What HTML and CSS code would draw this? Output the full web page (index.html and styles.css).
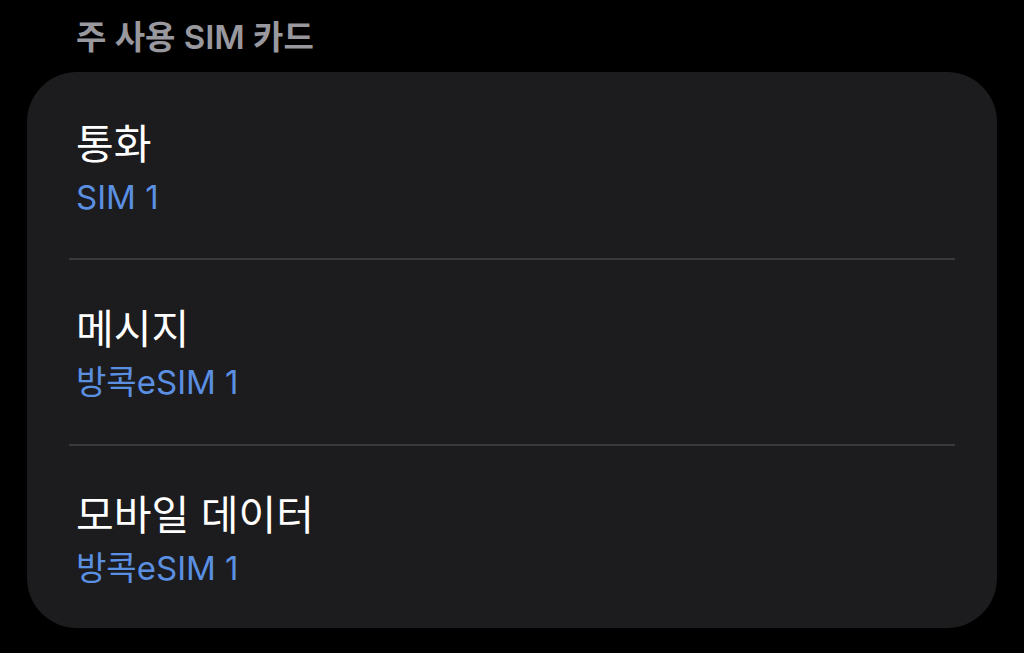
FILE: index.html
```html
<!DOCTYPE html>
<html lang="ko">
<head>
<meta charset="utf-8">
<title>주 사용 SIM 카드</title>
<link rel="stylesheet" href="styles.css">
</head>
<body>
  <h2 class="section-header">주 사용 SIM 카드</h2>
  <div class="card">
    <div class="row row-first">
      <div class="row-title">통화</div>
      <div class="row-value">SIM 1</div>
    </div>
    <div class="row">
      <div class="row-title">메시지</div>
      <div class="row-value">방콕eSIM 1</div>
    </div>
    <div class="row row-last">
      <div class="row-title">모바일 데이터</div>
      <div class="row-value">방콕eSIM 1</div>
    </div>
  </div>
</body>
</html>
```
FILE: styles.css
```css
html, body {
  margin: 0;
  padding: 0;
  background: #000;
}
body {
  font-family: "Inter", "Noto Sans CJK KR", sans-serif;
  width: 1024px;
  height: 653px;
  overflow: hidden;
}
.section-header {
  margin: 0;
  padding: 17px 0 0 76px;
  font-size: 33px;
  line-height: 40px;
  font-weight: 600;
  color: #98989e;
  height: 40px;
  margin-bottom: 15px;
}
.card {
  margin: 0 27px;
  background: #1c1c1e;
  border-radius: 50px;
  height: 556px;
  display: flex;
  flex-direction: column;
}
.row {
  margin: 0 42px;
  padding-left: 7px;
  height: 186px;
  box-sizing: border-box;
  border-bottom: 2px solid #3a3a3c;
  padding-top: 45px;
  flex: none;
}
.row-first {
  height: 188px;
  padding-top: 48px;
}
.row-last {
  border-bottom: none;
  flex: 1;
}
.row-title {
  font-size: 41px;
  line-height: 48px;
  color: #fff;
  font-weight: 400;
}
.row-value {
  font-size: 33px;
  line-height: 40px;
  color: #5b8fe2;
  margin-top: 9px;
}
```
